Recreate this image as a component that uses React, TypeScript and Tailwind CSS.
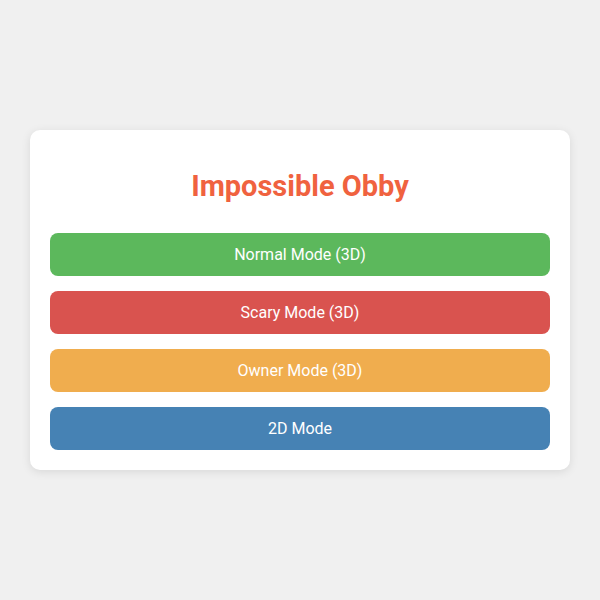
export default function App() {
  const modes = [
    { label: "Normal Mode (3D)", color: "bg-[#5cb85c]" },
    { label: "Scary Mode (3D)", color: "bg-[#d9534f]" },
    { label: "Owner Mode (3D)", color: "bg-[#f0ad4e]" },
    { label: "2D Mode", color: "bg-[#4682b4]" },
  ];
  return (
    <div
      className="w-[600px] h-[600px] bg-[#f0f0f0] flex items-center justify-center"
      style={{ fontFamily: "Roboto, 'Liberation Sans', sans-serif" }}
    >
      <div className="w-[540px] h-[340px] bg-white rounded-[10px] shadow-[0_2px_10px_rgba(0,0,0,0.1)] p-5 flex flex-col">
        <h1 className="mt-[22px] mb-[32px] text-center text-[29px] leading-[29px] font-bold text-[#f0623f]">
          Impossible Obby
        </h1>
        <div className="flex flex-col gap-[15px]">
          {modes.map((m) => (
            <button
              key={m.label}
              className={`${m.color} h-[43px] w-full rounded-[8px] text-white text-[16px] flex items-center justify-center`}
            >
              {m.label}
            </button>
          ))}
        </div>
      </div>
    </div>
  );
}
